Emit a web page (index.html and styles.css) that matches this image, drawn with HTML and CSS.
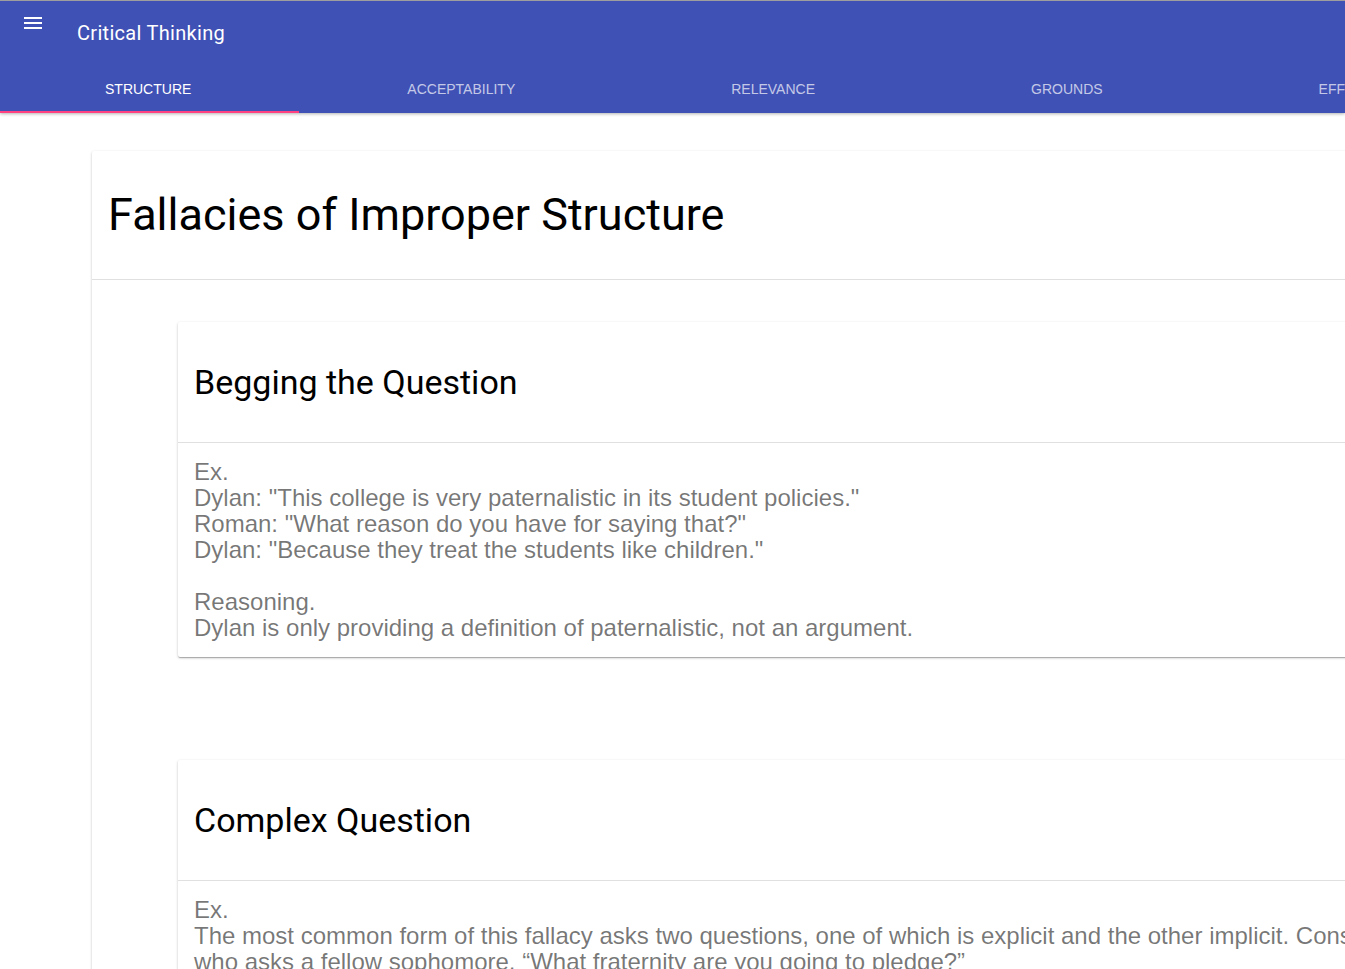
FILE: index.html
```html
<!DOCTYPE html>
<html lang="en">
<head>
<meta charset="utf-8">
<title>Critical Thinking</title>
<link rel="stylesheet" href="styles.css">
</head>
<body>
<header class="app-bar">
  <div class="toolbar">
    <button class="menu-btn" aria-label="Menu">
      <svg width="24" height="24" viewBox="0 0 24 24"><path fill="#fff" d="M3 18h18v-2H3v2zm0-5h18v-2H3v2zm0-7v2h18V6H3z"/></svg>
    </button>
    <h1 class="app-title">Critical Thinking</h1>
  </div>
  <nav class="tabs">
    <a class="tab active">Structure</a>
    <a class="tab">Acceptability</a>
    <a class="tab">Relevance</a>
    <a class="tab">Grounds</a>
    <a class="tab">Effectiveness</a>
  </nav>
</header>
<main class="content">
  <section class="card outer">
    <div class="card-header outer-header">
      <h2 class="section-title">Fallacies of Improper Structure</h2>
    </div>
    <div class="card-list">
      <article class="card inner">
        <div class="card-header inner-header">
          <h3 class="fallacy-title">Begging the Question</h3>
        </div>
        <div class="card-body">
          <p>Ex.<br>Dylan: "This college is very paternalistic in its student policies."<br>Roman: "What reason do you have for saying that?"<br>Dylan: "Because they treat the students like children."<br><br>Reasoning.<br>Dylan is only providing a definition of paternalistic, not an argument.</p>
        </div>
      </article>
      <article class="card inner">
        <div class="card-header inner-header">
          <h3 class="fallacy-title">Complex Question</h3>
        </div>
        <div class="card-body">
          <p>Ex.<br>The most common form of this fallacy asks two questions, one of which is explicit and the other implicit. Consider a student who asks a fellow sophomore, “What fraternity are you going to pledge?”</p>
        </div>
      </article>
    </div>
  </section>
</main>
</body>
</html>
```
FILE: styles.css
```css
html, body {
  margin: 0;
  padding: 0;
  overflow-x: hidden;
  background: #fff;
}
body {
  font-family: Roboto, "Liberation Sans", Arial, sans-serif;
  width: 1345px;
}
.app-bar {
  background: #3f51b5;
  border-top: 1px solid #9e9e9e;
  color: #fff;
  box-shadow: 0 1px 3px rgba(0,0,0,.3);
  position: relative;
  z-index: 2;
}
.toolbar {
  height: 64px;
  display: flex;
  align-items: flex-start;
}
.menu-btn {
  background: none;
  border: 0;
  padding: 0;
  margin: 10px 0 0 21px;
  width: 24px;
  height: 24px;
  display: flex;
}
.app-title {
  margin: 0 0 0 32px;
  font-size: 20px;
  font-weight: 400;
  line-height: 64px;
  letter-spacing: .3px;
}
.tabs {
  height: 48px;
  display: flex;
  overflow: hidden;
  white-space: nowrap;
  margin-left: -3px;
}
.tab {
  flex: none;
  padding: 0 108px;
  font-family: "Liberation Sans", Arial, sans-serif;
  font-size: 14px;
  text-transform: uppercase;
  color: rgba(255,255,255,.7);
  line-height: 48px;
  box-sizing: border-box;
  height: 48px;
}
.tab.active {
  color: #fff;
  border-bottom: 2px solid #ff4081;
}
.content {
  padding: 38px 0 0 92px;
}
.card {
  background: #fff;
  box-shadow: 0 1px 3px 0 rgba(0,0,0,.2), 0 1px 1px 0 rgba(0,0,0,.14), 0 2px 1px -1px rgba(0,0,0,.12);
  border-radius: 2px;
}
.outer {
  width: 1520px;
  min-height: 900px;
}
.card-header {
  border-bottom: 1px solid rgba(0,0,0,.12);
}
.outer-header {
  padding: 32px 16px 32px;
}
.section-title {
  margin: 0;
  font-size: 45px;
  font-weight: 400;
  line-height: 64px;
  color: #000;
}
.card-list {
  display: flex;
  flex-direction: column;
  gap: 103px;
  padding: 42px 86px 0;
}
.inner-header {
  padding: 40px 16px 40px;
}
.fallacy-title {
  margin: 0;
  font-size: 34px;
  font-weight: 400;
  line-height: 40px;
  color: #000;
}
.card-body {
  padding: 16px;
}
.card-body p {
  margin: 0;
  font-family: "Liberation Sans", Arial, sans-serif;
  font-size: 24px;
  line-height: 26px;
  color: rgba(0,0,0,.54);
}
```
